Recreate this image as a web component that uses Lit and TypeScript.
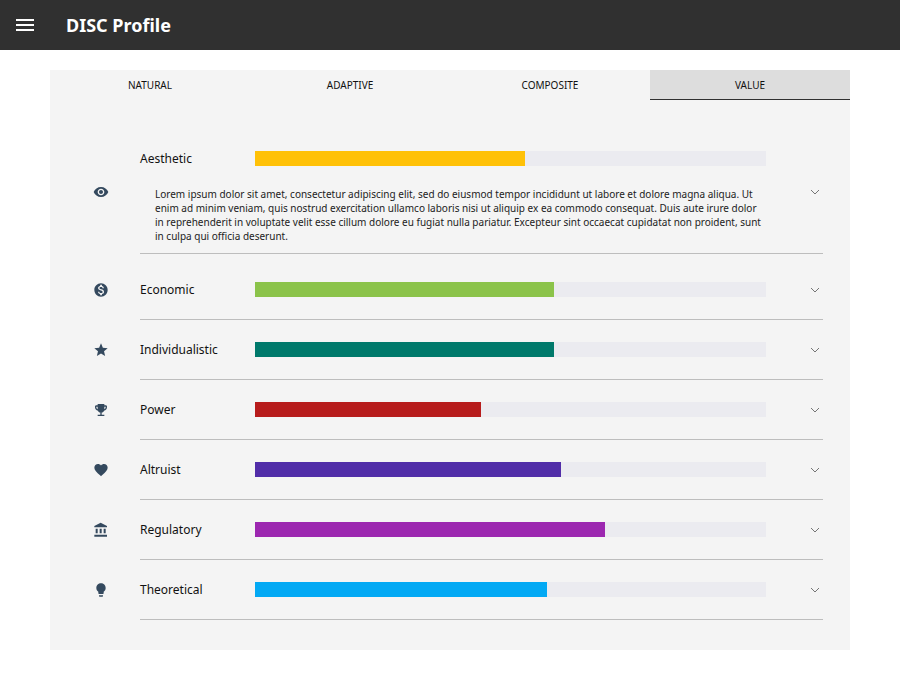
import { LitElement, html, css, svg } from 'lit';
import { customElement, state } from 'lit/decorators.js';

const LOREM =
  'Lorem ipsum dolor sit amet, consectetur adipiscing elit, sed do eiusmod tempor incididunt ut labore et dolore magna aliqua. Ut enim ad minim veniam, quis nostrud exercitation ullamco laboris nisi ut aliquip ex ea commodo consequat. Duis aute irure dolor in reprehenderit in voluptate velit esse cillum dolore eu fugiat nulla pariatur. Excepteur sint occaecat cupidatat non proident, sunt in culpa qui officia deserunt.';

const ICONS = {
  eye: 'M12 4.5C7 4.5 2.73 7.61 1 12c1.73 4.39 6 7.5 11 7.5s9.27-3.11 11-7.5c-1.73-4.39-6-7.5-11-7.5zM12 17c-2.76 0-5-2.24-5-5s2.24-5 5-5 5 2.24 5 5-2.24 5-5 5zm0-8c-1.66 0-3 1.34-3 3s1.34 3 3 3 3-1.34 3-3-1.34-3-3-3z',
  money:
    'M12 2C6.48 2 2 6.48 2 12s4.48 10 10 10 10-4.48 10-10S17.52 2 12 2zm1.41 16.09V20h-2.67v-1.93c-1.71-.36-3.16-1.46-3.27-3.4h1.96c.1 1.05.82 1.87 2.65 1.87 1.96 0 2.4-.98 2.4-1.59 0-.83-.44-1.61-2.67-2.14-2.48-.6-4.18-1.62-4.18-3.67 0-1.72 1.39-2.84 3.11-3.21V4h2.67v1.95c1.86.45 2.79 1.86 2.85 3.39H14.3c-.05-1.11-.64-1.87-2.22-1.87-1.5 0-2.4.68-2.4 1.64 0 .84.65 1.39 2.67 1.91s4.18 1.39 4.18 3.91c-.01 1.83-1.38 2.83-3.12 3.16z',
  star: 'M12 17.27L18.18 21l-1.64-7.03L22 9.24l-7.19-.61L12 2 9.19 8.63 2 9.24l5.46 4.73L5.82 21z',
  trophy:
    'M19 5h-2V3H7v2H5c-1.1 0-2 .9-2 2v1c0 2.55 1.92 4.63 4.39 4.94.63 1.5 1.98 2.63 3.61 2.96V19H7v2h10v-2h-4v-3.1c1.63-.33 2.98-1.46 3.61-2.96C19.08 12.63 21 10.55 21 8V7c0-1.1-.9-2-2-2zM5 8V7h2v3.82C5.84 10.4 5 9.3 5 8zm14 0c0 1.3-.84 2.4-2 2.82V7h2v1z',
  heart:
    'M12 21.35l-1.45-1.32C5.4 15.36 2 12.28 2 8.5 2 5.42 4.42 3 7.5 3c1.74 0 3.41.81 4.5 2.09C13.09 3.81 14.76 3 16.5 3 19.58 3 22 5.42 22 8.5c0 3.78-3.4 6.86-8.55 11.54L12 21.35z',
  bank: 'M4 10v7h3v-7H4zm6 0v7h3v-7h-3zM2 22h19v-3H2v3zm14-12v7h3v-7h-3zm-4.5-9L2 6v2h19V6l-9.5-5z',
  bulb: 'M9 21c0 .55.45 1 1 1h4c.55 0 1-.45 1-1v-1H9v1zm3-19C8.14 2 5 5.14 5 9c0 2.38 1.19 4.47 3 5.74V17c0 .55.45 1 1 1h6c.55 0 1-.45 1-1v-2.26c1.81-1.27 3-3.36 3-5.74 0-3.86-3.14-7-7-7z',
};

const VALUES = [
  { name: 'Aesthetic', icon: ICONS.eye, color: '#ffc107', width: 270 },
  { name: 'Economic', icon: ICONS.money, color: '#8bc34a', width: 299 },
  { name: 'Individualistic', icon: ICONS.star, color: '#00796b', width: 299 },
  { name: 'Power', icon: ICONS.trophy, color: '#b71c1c', width: 226 },
  { name: 'Altruist', icon: ICONS.heart, color: '#512da8', width: 306 },
  { name: 'Regulatory', icon: ICONS.bank, color: '#9c27b0', width: 350 },
  { name: 'Theoretical', icon: ICONS.bulb, color: '#03a9f4', width: 292 },
];

const TABS = ['Natural', 'Adaptive', 'Composite', 'Value'];

@customElement('app-root')
export class AppRoot extends LitElement {
  @state()
  private tab = 3;

  @state()
  private open = 0;

  static styles = css`
    :host {
      display: block;
      font-family: 'Noto Sans', sans-serif;
      color: #111;
    }
    .bar {
      display: flex;
      align-items: center;
      height: 50px;
      background: #303030;
      color: #fff;
    }
    .menu {
      width: 24px;
      height: 24px;
      margin-left: 13px;
      fill: #fff;
    }
    .title {
      margin-left: 29px;
      font-size: 18px;
      font-weight: 700;
    }
    .panel {
      margin: 20px 50px 0;
      padding-bottom: 30px;
      background: #f4f4f4;
    }
    .tabs {
      display: flex;
      margin-bottom: 30px;
    }
    .tab {
      flex: 1;
      height: 30px;
      line-height: 30px;
      text-align: center;
      font-size: 10px;
      text-transform: uppercase;
      cursor: pointer;
      box-sizing: border-box;
    }
    .tab.active {
      background: #ddd;
      border-bottom: 1px solid #303030;
    }
    .row {
      display: flex;
      align-items: center;
      margin: 0 27px 0 43px;
    }
    .row.open {
      margin-bottom: 6px;
    }
    .icon {
      width: 16px;
      height: 16px;
      margin-right: 31px;
      flex: none;
      fill: #34495e;
    }
    .main {
      flex: 1;
      display: flex;
      align-items: center;
      border-bottom: 1px solid #bdbdbd;
    }
    .content {
      width: 626px;
    }
    .head {
      display: flex;
      align-items: center;
      height: 59px;
    }
    .row.open .head {
      height: 57px;
      padding-bottom: 0;
    }
    .name {
      width: 115px;
      font-size: 12px;
    }
    .track {
      flex: 1;
      height: 15px;
      background: #ebebf0;
    }
    .fill {
      height: 100%;
    }
    .text {
      margin: 0;
      padding: 0 0 10px 15px;
      font-size: 10px;
      line-height: 14px;
      color: #222;
    }
    .chev {
      width: 10px;
      height: 6px;
      margin-left: 44px;
      fill: none;
      stroke: #757575;
      stroke-width: 1;
    }
  `;

  render() {
    return html`
      <header class="bar">
        <svg class="menu" viewBox="0 0 24 24">
          <path d="M3 18h18v-2H3v2zm0-5h18v-2H3v2zm0-7v2h18V6H3z" />
        </svg>
        <div class="title">DISC Profile</div>
      </header>
      <section class="panel">
        <nav class="tabs">
          ${TABS.map(
            (t, i) =>
              html`<div
                class="tab ${i === this.tab ? 'active' : ''}"
                @click=${() => (this.tab = i)}
              >
                ${t}
              </div>`
          )}
        </nav>
        ${VALUES.map((v, i) => this.renderRow(v, i))}
      </section>
    `;
  }

  renderRow(v: (typeof VALUES)[number], i: number) {
    const open = i === this.open;
    return html`<div class="row ${open ? 'open' : ''}">
      <svg class="icon" viewBox="0 0 24 24">${svg`<path d=${v.icon} />`}</svg>
      <div class="main">
        <div class="content">
          <div class="head">
            <div class="name">${v.name}</div>
            <div class="track">
              <div
                class="fill"
                style="width:${(v.width / 511) * 100}%;background:${v.color}"
              ></div>
            </div>
          </div>
          ${open ? html`<p class="text">${LOREM}</p>` : ''}
        </div>
        <svg
          class="chev"
          viewBox="0 0 10 6"
          @click=${() => (this.open = open ? -1 : i)}
        >
          <path d="M1 1l4 4 4-4" />
        </svg>
      </div>
    </div>`;
  }
}
